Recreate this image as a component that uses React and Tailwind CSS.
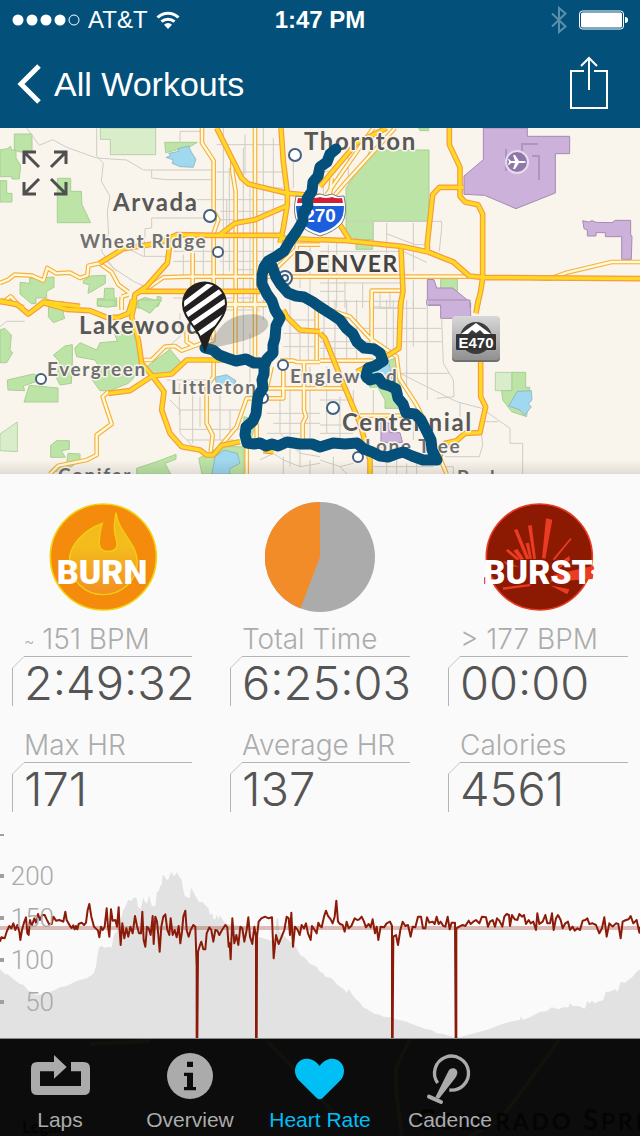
import React, { useState } from "react";
import clsx from "clsx";

// Map geometry, one entry per tile. Tile units are a third of a map unit.
const TILES = [
  {
    id: "nw",
    transform: "translate(0 128) scale(0.33333)",
    parks:
      "M43 18H96V72H60L43 66Z M0 66L22 62L32 55L34 66H48V90L62 112L58 153H36V146H0Z M0 158H20V196H36V222H0Z M172 151H212V190H244L246 230L272 284H172Z M494 43H592L572 55L520 68L497 74Z M60 463L90 466L88 452L162 447V478L140 490V510H108V527H94L60 498Z M250 458L272 444L316 442V466L296 478L280 488L264 496L268 470L250 466Z M314 481H342V510H350V535H292V512H312Z M410 520L434 508L470 518L472 505L485 508L475 535L440 540H400Z",
    paleParks: "M301 0H467V80H331V34H301Z",
    water:
      "M498 88L512 84L506 76L536 70L534 62L566 54L574 72L588 94L580 118L540 116L516 106L520 96Z",
    airfields: "",
    minor:
      "M80 0L118 52L158 35L200 58L290 90L380 96L430 126H640 M290 0V85L310 105L304 160L330 205L322 250L326 320L306 345V372L340 420L400 460L440 478 M455 126V150L500 155H640 M540 45V10H600 M670 0V540 M688 120V430 M730 60V540 M750 180V540 M790 0V540 M820 30V400 M735 20V140 M650 50H840 M650 132H850 M540 215H850 M455 270H640 M455 270V300L435 302V330 M660 250H820 M660 275H760 M680 215V300 M520 370H840 M660 400H790 M520 400H640 M700 425H800 M610 340V440 M550 380V440 M320 400L350 430 M660 510H760 M520 510H560 M880 60V180 M780 180H850 M360 350L430 385H500 M433 385V330 M930 350V500 M900 370V480",
    secondary:
      "M606 0V45L641 98V250L655 275L641 315 M765 0V540 M697 100V130L707 190V540 M641 320V540 M578 375V540 M430 490L490 448L560 446H960 M0 465L25 455L44 440L96 443L130 458L142 420L168 436L210 434L240 450L262 442L265 413L298 406L335 432L355 470L385 492 M365 506V540 M365 506L385 500 M0 520L15 518L32 505L50 525 M680 528H800 M830 420L890 362V350H960",
    motorway:
      "M650 0L725 150L745 168L858 195L960 205 M843 0L850 100L862 195V230L850 300L840 345 M660 320L705 286L765 275L865 232 M298 406L370 362L480 345L530 320L640 322H840 M530 322L508 360L502 405L440 475L405 500L398 540 M415 490H780 M0 518L50 530L70 540 M110 540L130 522L240 535 M840 330L960 336",
  },
  {
    id: "ne",
    transform: "translate(320 128) scale(0.33333)",
    parks:
      "M150 66H327V280H160V335H78V180L140 90Z M108 345H158V364H108Z M362 452H412V490H362Z M296 0H326V8H300Z",
    paleParks: "",
    water: "",
    airfields:
      "M490 0H622V25H749V77H706V195L588 242L494 202L432 199V144L490 95Z M788 278L806 282L816 278L828 283L876 284L886 277H932V322L936 324L934 394H905V326H856V314H828V324H802V306L792 302Z M322 454L342 455L350 480H398L452 524V540H362V532H322Z",
    minor:
      "M80 280H365V300L358 370 M160 280V340 M200 285V430 M280 285V430 M200 317L285 350 M245 368L320 403 M280 350H320 M50 345V540 M25 350V540 M75 460V540 M0 490H75 M128 465V540 M0 465H240 M0 370H240 M0 520H240 M180 490V540 M210 490V540 M280 455V540 M60 180L110 130 M10 100V200 M0 130H40 M85 60V180",
    secondary:
      "M0 446H445 M155 540V488H240 M488 448H620L690 452L740 434L875 402H960 M30 200L35 150 M20 200L160 0 M45 200L75 165L225 0",
    motorway:
      "M0 175L110 45L200 0 M0 335L80 338L245 355L325 372L400 402L448 444L486 448L960 452 M388 0V50L420 118V205L435 222L474 230L488 258V450L482 490L470 540 M430 178H358L338 200L322 345V375 M60 290L88 335 M243 362L249 490L240 540",
  },
  {
    id: "sw",
    transform: "translate(0 300) scale(0.33333)",
    parks:
      "M146 8L190 5V40L194 55L160 68L145 50Z M292 0H345V18L320 22L292 15Z M0 90L14 85L34 105L30 150L38 158L20 188H0Z M224 145L240 128L290 150L300 128L352 124L344 102L420 70L410 120L420 190L400 235L385 250L330 272H300L270 230L300 205L285 180L230 170Z M195 138L217 134V200L214 250L180 255L170 235L178 185L160 165Z M22 240L100 222L122 230V240L70 258L74 272L24 270Z M88 256L174 264V306H72Z M440 200L510 148L545 190L515 225H450Z M152 436L170 422H208V448L184 452L196 472H152Z M204 460L240 462V480L215 500L150 520L200 490Z M410 505L470 485L528 463V478L495 490L512 522H410Z M596 475L660 440H732V522H606Z M732 350L770 360L750 430L730 400Z M415 0H485L450 40L415 20Z",
    paleParks: "M0 402L52 366V455L0 452Z",
    water:
      "M644 232L680 224L708 242L700 258L650 252Z M645 470L672 450L712 460L720 490L690 505L688 522H636Z",
    airfields: "",
    minor:
      "M0 80L20 64H74 M480 160L540 110V40 M510 300L540 330H720 M540 330V400L580 440 M578 240V430 M538 250V345 M500 240H640 M660 280V420 M540 388H720 M560 420H700 M690 330V400 M750 100V290 M600 290V380 M730 0V170 M790 0V60 M800 340H960 M840 300V400L900 460L960 470 M870 0V180 M870 270V500 M930 200V420 M780 480L820 460L850 480L900 500 M850 100H950 M850 60H950 M850 140H950 M900 90V180 M925 0V180 M660 30H780 M820 370H960 M850 470V522 M900 440V500L960 490 M880 225H960 M800 400H900 M520 60L560 110 M930 480V522",
    secondary:
      "M150 522L175 497L260 480L290 465V405L335 372L308 290L325 275 M430 180H455L495 140L525 138L545 152L605 130L640 122V90 M560 90V125L580 138 M706 0V180 M765 0V170 M641 180V230L620 260V370L638 405L632 455 M850 190V295H740L710 380L660 440 M740 430V522 M680 15H800 M800 265H960 M840 182H880L890 186H960 M912 182V330L918 350L908 370V420 M950 0V180 M130 0L200 22L240 18 M770 370V420 M815 200L800 265 M365 0V30",
    motorway:
      "M0 5L50 12L85 42L130 8L200 28L270 32L320 52H355L385 40L398 0 M405 0L395 50L415 120L425 190L457 228L492 275L485 330L510 400L545 440L600 450L620 465H640L665 436L720 425 M325 280L390 272L457 228L515 222L560 180H780 M850 30L860 50L900 90L960 95 M790 452L820 455",
  },
  {
    id: "se",
    transform: "translate(320 300) scale(0.33333)",
    parks:
      "M576 217H617V262H630L625 290L620 350L575 335L548 300L545 272H576Z M195 185L225 175L232 210L240 260L205 260L150 262L145 230Z M175 265L215 268L250 325H195V300Z",
    paleParks: "M526 217H576V272H526Z",
    water:
      "M150 220L175 185L205 180L215 235L190 250Z M592 274L634 272L636 300L625 312L634 320L614 346L600 330L566 318Z",
    airfields:
      "M320 0H450V20L452 30V55H362V15H320Z M183 365L210 370V398H240L248 428H183Z",
    minor:
      "M45 0V180 M12 40V180 M80 0V180 M110 0V180 M200 0V150 M220 0V160 M260 0V220 M280 0V140 M322 0V300 M0 85H155 M0 125H150 M0 145H150 M160 25H320 M160 85H365 M240 125H365 M240 220H390 M160 20L240 25 M365 55L370 190L400 240L402 290L350 295 M200 200L320 260L410 305L485 325L570 385V430H608V522 M490 365H535 M485 405L488 435L478 470H375 M375 500H400V522 M20 200V400 M60 290V420 M0 300H90 M0 375H80 M0 400H100 M100 270V320 M160 270V340 M260 210V260 M280 350V420 M0 480L60 500L100 490 M40 470V522 M60 500L80 522 M180 440L250 470 M200 480V522 M230 480V522 M260 490V522 M160 500H340 M290 480V522 M420 310V350",
    secondary:
      "M155 0V130 M0 20L90 50L150 115L230 170L238 235L290 315L345 430L360 475L380 522 M0 182H160 M0 265H80 M120 347H290 M140 415V440",
    motorway:
      "M243 0L240 60L237 145L190 175L110 215 M0 100L15 115L65 240L120 370L150 480V522 M475 0L468 40 M482 150V290L497 320L488 360L480 398L435 400L410 422L375 430L355 480",
  },
];

const ROUTE =
  "336,149 330,154 327,162 320,167 318,176 313,182 312,191 307,199 308,206 303,213 303,221 297,231 290,241 284,251 277,256 268,261 264,267 262,275 262,284 267,294 272,301 275,310 280,318 276,326 275,338 273,345 273,353 267,359 264,366 264,374 262,380 263,388 258,396 257,404 256,414 253,421 246,427 245,435 247,443 254,444 260,443 266,446 272,444 278,446 287,442 300,444 312,444 320,447 333,443 345,444 357,443 364,449 372,452 380,456 388,457 396,454 403,452 412,456 423,460 437,460 432,450 431,440 427,432 421,420 415,414 406,413 403,404 398,398 396,389 390,386 383,384 378,378 370,380 366,376 368,368 375,366 383,361 380,353 374,349 364,348 357,342 353,334 346,328 340,320 331,314 320,307 313,302 304,297 296,296 288,293 281,285 276,277 272,266";
const ROUTE_START =
  "205,348 213,350 219,355 227,358 236,361 246,359 254,363 263,363";

const TOWNS = [
  { name: "Thornton", x: 304, y: 150, big: true, dot: [295, 155, 6] },
  { name: "Arvada", x: 113, y: 211, big: true, dot: [210, 216, 6] },
  { name: "Wheat Ridge", x: 80, y: 248, dot: [218, 252, 5] },
  { name: "Lakewood", x: 79, y: 334, big: true },
  { name: "Evergreen", x: 47, y: 376, dot: [41, 379, 5] },
  { name: "Littleton", x: 171, y: 394, dot: [263, 398, 5] },
  { name: "Englewood", x: 290, y: 383, dot: [283, 365, 5] },
  { name: "Centennial", x: 342, y: 431, big: true, dot: [333, 408, 6] },
  { name: "Lone Tree", x: 365, y: 453, dot: [358, 457, 5] },
  { name: "Conifer", x: 58, y: 482 },
  { name: "Parker", x: 457, y: 484 },
];

// Elevation and heart rate samples, in thirds of a chart unit.
const ELEVATION =
  "0,448 15,462 25,464 40,478 60,492 70,494 85,512 95,515 105,525 130,522 140,520 160,512 180,502 200,498 225,485 240,480 260,475 280,462 288,440 292,410 297,382 305,378 315,384 325,380 335,382 342,345 350,335 362,300 370,270 375,262 385,240 394,242 402,232 410,235 414,262 422,266 430,232 435,246 441,250 448,226 454,254 460,260 467,255 470,218 477,212 480,198 485,195 488,165 494,168 500,180 505,178 510,164 515,156 520,168 526,165 531,155 535,165 545,180 549,205 554,228 562,232 568,236 574,203 580,215 590,235 597,246 608,246 615,255 625,264 630,284 637,280 640,298 646,298 650,284 655,300 660,286 668,300 680,312 700,315 740,320 760,336 775,350 800,358 810,362 825,355 829,300 834,292 838,335 850,345 870,365 880,370 890,385 900,405 912,410 920,420 930,432 940,435 950,440 960,455 970,460 976,470 985,472 995,475 1000,480 1010,492 1020,500 1030,506 1040,518 1047,506 1054,520 1065,535 1078,546 1090,562 1105,570 1125,582 1140,584 1150,590 1175,592 1187,598 1220,605 1235,612 1280,628 1295,630 1310,640 1330,642 1360,652 1380,652 1400,646 1440,635 1460,630 1490,618 1520,608 1545,602 1560,600 1563,588 1568,600 1590,592 1620,575 1640,574 1655,562 1675,568 1690,562 1705,562 1710,550 1718,558 1735,558 1755,566 1762,542 1768,552 1775,542 1785,550 1795,545 1810,540 1817,515 1830,515 1845,508 1853,515 1862,486 1875,488 1900,468 1910,455 1920,448";

const HEART_RATE =
  "0,365 4,352 14,355 20,335 28,318 34,325 40,310 46,330 52,315 58,335 61,360 66,330 72,308 78,292 82,340 86,345 90,300 95,318 103,295 108,308 114,282 120,300 126,285 134,285 140,298 147,312 155,312 160,290 168,302 178,300 190,305 196,275 200,300 210,318 215,324 220,316 224,328 228,318 232,328 236,312 245,308 252,315 258,308 263,270 268,252 274,290 282,320 294,332 298,352 303,320 308,330 314,320 320,265 324,320 328,350 333,268 338,302 346,300 351,320 356,262 359,330 362,375 367,310 373,355 379,325 385,350 391,320 398,340 405,288 411,318 417,340 423,340 427,275 431,360 436,380 441,320 446,325 452,345 458,288 461,372 466,290 471,305 475,345 479,395 484,320 490,290 496,283 502,330 508,345 512,295 518,345 524,330 530,352 536,318 541,370 546,335 550,290 556,272 560,330 566,350 572,330 580,315 586,320 590,440 590,655 592,655 594,395 600,375 604,365 610,388 616,388 620,340 628,322 634,330 640,365 646,330 652,332 658,345 666,330 676,315 682,322 686,380 689,370 692,418 697,295 703,370 709,345 715,375 721,320 727,325 733,365 740,330 745,292 750,350 757,372 763,320 768,350 768,655 770,655 771,350 776,305 784,295 795,290 806,295 816,292 821,415 828,345 836,372 845,350 853,330 860,290 866,295 870,345 874,278 879,380 885,320 893,330 899,345 905,315 912,325 918,310 924,340 932,360 936,318 944,330 950,340 955,308 960,318 965,322 972,290 978,272 984,288 992,298 998,310 1004,290 1009,242 1014,305 1020,312 1028,315 1034,335 1040,305 1046,325 1054,318 1064,295 1072,300 1078,298 1085,290 1092,305 1098,322 1106,312 1112,322 1118,298 1125,340 1130,320 1135,360 1142,320 1152,322 1160,310 1170,305 1176,318 1176,655 1178,655 1180,350 1188,345 1194,375 1201,330 1208,305 1216,318 1224,315 1232,350 1238,320 1246,322 1254,290 1263,290 1269,325 1276,325 1281,292 1288,308 1298,305 1304,312 1310,290 1316,312 1322,305 1330,318 1336,320 1343,290 1349,328 1355,308 1365,308 1367,655 1369,655 1369,325 1378,320 1388,315 1396,318 1406,302 1412,312 1420,305 1428,300 1438,310 1446,290 1458,292 1464,320 1470,305 1478,300 1485,320 1491,295 1498,302 1507,320 1513,290 1520,282 1527,285 1530,318 1536,285 1544,298 1552,300 1558,282 1566,290 1572,285 1578,312 1586,300 1592,310 1600,305 1608,330 1612,280 1618,312 1628,305 1636,285 1642,310 1650,310 1656,280 1661,330 1668,295 1674,285 1682,300 1688,325 1696,310 1704,305 1710,330 1718,320 1724,332 1732,325 1740,330 1748,302 1756,300 1762,295 1768,312 1778,310 1788,315 1798,340 1806,325 1813,292 1820,350 1828,310 1838,320 1848,310 1855,312 1862,355 1868,305 1878,300 1886,298 1892,288 1900,310 1910,300 1918,338 1920,320";

const AXIS = [
  { value: 200, y: 876 },
  { value: 150, y: 918 },
  { value: 100, y: 960 },
  { value: 50, y: 1002 },
];

const StatusBar = () => (
  <div className="grid grid-cols-3 items-center h-10 px-3 text-2xl">
    <div className="flex items-center gap-2">
      <svg className="w-[68px] h-3" viewBox="0 0 68 12" fill="white">
        <circle cx="6" cy="6" r="5.5" />
        <circle cx="20" cy="6" r="5.5" />
        <circle cx="34" cy="6" r="5.5" />
        <circle cx="48" cy="6" r="5.5" />
        <circle cx="62" cy="6" r="5" fill="none" stroke="white" />
      </svg>
      <span>AT&amp;T</span>
      <svg className="w-6 h-5" viewBox="0 0 24 20" fill="none" stroke="white">
        <path d="M1.5 7.5A15 15 0 0 1 22.500 7.500" strokeWidth="3" />
        <path d="M5.500 11.700A9.500 9.500 0 0 1 18.500 11.700" strokeWidth="3" />
        <path d="M12 19L8 14.800A5.500 5.500 0 0 1 16 14.800Z" fill="white" stroke="none" />
      </svg>
    </div>
    <div className="text-center font-bold">1:47 PM</div>
    <div className="flex items-center justify-end gap-3">
      <svg className="w-4 h-7" viewBox="0 0 16 28" fill="none" stroke="#5b90ad" strokeWidth="2">
        <path d="M1 7.500L14.500 20.500L8 26V2L14.500 7.500L1 20.500" />
      </svg>
      <svg className="w-[49px] h-5" viewBox="0 0 49 20">
        <rect x="0.500" y="1" width="44" height="18" rx="3" fill="none" stroke="white" />
        <rect x="2" y="2.500" width="41" height="15" rx="1.500" fill="white" />
        <path d="M46 7Q49 7 49 10Q49 13 46 13Z" fill="white" />
      </svg>
    </div>
  </div>
);

const Header = () => (
  <header className="bg-[#03507a] text-white font-['Liberation_Sans',Arial,sans-serif]">
    <StatusBar />
    <div className="flex items-center justify-between h-[88px] pl-4 pr-8">
      <a href="#workouts" className="flex items-center gap-3 text-[34px] leading-10">
        <svg className="w-[26px] h-10" viewBox="0 0 26 40" fill="none" stroke="white" strokeWidth="5">
          <path d="M23 2L5 20L23 38" />
        </svg>
        All Workouts
      </a>
      <button type="button" aria-label="Share" className="pb-1">
        <svg className="w-[38px] h-[53px]" viewBox="0 0 38 53" fill="none" stroke="white" strokeWidth="2">
          <path d="M14 15H1V52H37V15H24M19 34V2M11 10L19 2L27 10" />
        </svg>
      </button>
    </div>
  </header>
);

const MapLayer = ({ layer, ...rest }) => (
  <g {...rest}>
    {TILES.map((tile) => (
      <path key={tile.id} transform={tile.transform} d={tile[layer]} />
    ))}
  </g>
);

const InterstateShield = () => (
  <g>
    <path
      d="M296 196Q302 198 308 194Q314 197 320 194Q326 197 332 194Q338 198 344 196Q348 214 342 223Q334 232 320 236Q306 232 298 223Q292 214 296 196Z"
      fill="#ffffff"
      stroke="#7d7d80"
    />
    <path d="M298 198Q304 199 308 197Q314 199 320 197Q326 199 332 197Q336 199 342 198L343 203H297Z" fill="#cf2038" />
    <path d="M296 206H344Q344 217 339 222Q332 230 320 233Q308 230 301 222Q296 217 296 206Z" fill="#1c5fdc" />
    <text x="320" y="222" textAnchor="middle" className="fill-white text-[19px] font-bold">
      270
    </text>
  </g>
);

const TollSign = () => (
  <g>
    <rect x="452" y="317" width="48" height="45" rx="4" fill="#6f6f6f" />
    <rect x="452" y="316" width="48" height="44" rx="4" fill="url(#sign)" />
    <circle cx="476" cy="338" r="16" fill="#3c3c3c" />
    <path d="M461 334L476 323L491 334L484 334L480 330L476 333L472 330L468 334Z" fill="white" />
    <rect x="456" y="334" width="40" height="16" rx="1" fill="#333333" />
    <text x="476" y="348" textAnchor="middle" className="fill-white text-[15px] font-bold">
      E470
    </text>
  </g>
);

const StartPin = () => (
  <g>
    <path d="M206 349C216 334 222 318 243 315C258 312 270 317 268 326C264 338 232 344 206 349Z" fill="#555555" opacity="0.3" />
    <clipPath id="pin">
      <path d="M205 350L199 335C193 324 183 316 183 304A21.500 21.500 0 0 1 226 304C226 316 216 324 210 335Z" />
    </clipPath>
    <g clipPath="url(#pin)">
      <path d="M180 280H230V352H180Z" fill="#231f20" />
      <path d="M180 307L212 283M181 319L228 286M188 327L230 298M196 336L230 312" stroke="white" strokeWidth="5" />
    </g>
    <path
      d="M205 350L199 335C193 324 183 316 183 304A21.500 21.500 0 0 1 226 304C226 316 216 324 210 335Z"
      fill="none"
      stroke="#231f20"
      strokeWidth="2"
    />
  </g>
);

const WorkoutMap = () => (
  <section className="relative" aria-label="Route">
    <svg className="block w-full" viewBox="0 128 640 346">
      <defs>
        <linearGradient id="sign" x2="0" y2="1">
          <stop stopColor="#d8d8d8" />
          <stop offset="1" stopColor="#909090" />
        </linearGradient>
        <linearGradient id="fade" x2="0" y2="1">
          <stop stopColor="#000000" stopOpacity="0" />
          <stop offset="1" stopColor="#000000" stopOpacity="0.1" />
        </linearGradient>
      </defs>
      <path d="M0 128H640V474H0Z" fill="#f9f5ed" />
      <MapLayer layer="paleParks" fill="#d9edcb" stroke="#b5d3a2" strokeWidth="3" />
      <MapLayer layer="parks" fill="#bce4a7" stroke="#a9cf92" strokeWidth="3" />
      <MapLayer layer="water" fill="#a0d8f0" stroke="#7fa8b5" strokeWidth="2" />
      <MapLayer layer="airfields" fill="#ccb1da" stroke="#a48cb2" strokeWidth="3" />
      <path d="M522 151V144H538M532 156H539V180M506 149V171" fill="none" stroke="#b094c0" strokeWidth="2" />
      <MapLayer layer="minor" fill="none" stroke="#cfccc5" strokeWidth="3" />
      <MapLayer layer="secondary" fill="none" stroke="#f6b13e" strokeWidth="14" strokeLinejoin="round" />
      <MapLayer layer="secondary" fill="none" stroke="#fffadb" strokeWidth="7" strokeLinejoin="round" />
      <MapLayer layer="motorway" fill="none" stroke="#f79a45" strokeWidth="17" strokeLinejoin="round" />
      <MapLayer layer="motorway" fill="none" stroke="#ffd91f" strokeWidth="10" strokeLinejoin="round" />

      {/*Town names*/}
      <g fill="#ffffff" stroke="#43607f" strokeWidth="2">
        {TOWNS.filter((town) => town.dot).map(({ name, dot: [cx, cy, r] }) => (
          <circle key={name} cx={cx} cy={cy} r={r} />
        ))}
        <circle cx="285" cy="278" r="7" />
        <circle cx="285" cy="278" r="3" />
      </g>
      <g
        className="font-['Lato',sans-serif] font-bold tracking-widest"
        stroke="#f9f5ed"
        strokeWidth="3"
        strokeLinejoin="round"
        paintOrder="stroke"
      >
        {TOWNS.map(({ name, x, y, big }) => (
          <text
            key={name}
            x={x}
            y={y}
            className={big ? "fill-[#585858] text-[24px]" : "fill-[#707070] text-[19px]"}
          >
            {name}
          </text>
        ))}
        <text x="293" y="272" className="fill-[#444444] text-[28px]">
          D<tspan className="text-[23px]">ENVER</tspan>
        </text>
      </g>

      <g className="font-['Liberation_Sans',Arial,sans-serif]">
        <InterstateShield />
        <TollSign />
      </g>
      <circle cx="517" cy="162" r="11" fill="#8f77a9" stroke="#e6dcec" strokeWidth="2" />
      <path
        d="M526 162Q526 161 523 161H519L515 155H513L515 161H511L509 159H508L509 162L508 165H509L511 163H515L513 169H515L519 163H523Q526 163 526 162Z"
        fill="white"
      />

      {/*The recorded route*/}
      <g fill="none" stroke="#04507a" strokeWidth="11" strokeLinecap="round" strokeLinejoin="round">
        <polyline points={ROUTE} />
        <polyline points={ROUTE_START} />
      </g>
      <StartPin />
      <path d="M0 460H640V474H0Z" fill="url(#fade)" />
    </svg>
    <button type="button" aria-label="Expand map" className="absolute left-[22px] top-[22px]">
      <svg className="size-[46px]" viewBox="0 0 46 46" fill="none" stroke="#4f4f4f" strokeWidth="3">
        <path d="M2 14V2H14M2 2L17 17M32 2H44V14M44 2L29 17M2 32V44H14M2 44L17 29M32 44H44V32M44 44L29 29" />
      </svg>
    </button>
  </section>
);

const BurnIcon = () => (
  <svg className="size-[110px] overflow-visible" viewBox="141 66 330 330">
    <defs>
      <linearGradient id="flame" x2="0" y2="1">
        <stop stopColor="#f5b81c" />
        <stop offset="0.400" stopColor="#f4bd1c" />
        <stop offset="1" stopColor="#f28f22" />
      </linearGradient>
    </defs>
    <circle cx="310" cy="231" r="159" fill="#f48b0c" stroke="#f2d211" strokeWidth="5" />
    <path
      d="M348 98C343 130 340 152 347 172C356 200 350 214 325 214C300 214 297 200 298 180C299 158 302 145 307 130C255 148 206 195 208 245C210 300 255 344 308 344C362 344 412 305 412 245C412 190 355 158 348 98Z"
      fill="url(#flame)"
      stroke="#f2cf13"
      strokeWidth="4"
    />
    <text
      x="306"
      y="312"
      textAnchor="middle"
      className="font-['Roboto',sans-serif] font-black text-[102px] fill-white"
    >
      BURN
    </text>
  </svg>
);

const BurstIcon = () => (
  <svg className="size-[110px] overflow-visible" viewBox="489 66 330 330">
    <circle cx="658" cy="231" r="159" fill="#8c1902" stroke="#ea3b23" strokeWidth="5" />
    <path
      d="M678 115L697 119L676 236L666 234Z M624 137L635 135L648 236L640 238Z M582 150L592 147L628 236L618 238Z M617 190L627 188L636 236L628 236Z M580 212L592 206L612 236L602 240Z M557 212L564 207L600 238L590 240Z M751 174L755 177L704 240L698 238Z M735 236L748 228L750 240L700 280Z M700 285L820 257L823 268L808 274L820 284L818 297L690 305Z M690 316L748 328L742 343Z M548 322L630 312L632 318L550 330Z M492 292L520 290V308L492 312Z M550 242L600 262L560 256Z"
      fill="#ea3b23"
    />
    <text
      x="655"
      y="312"
      textAnchor="middle"
      className="font-['Roboto',sans-serif] font-black text-[102px] fill-white"
    >
      BURST
    </text>
  </svg>
);

const ZonePie = () => (
  <svg className="size-[110px]" viewBox="0 0 110 110">
    <circle cx="55" cy="55" r="55" fill="#ababab" />
    <path d="M55 55V0A55 55 0 0 0 35.500 106.500Z" fill="#f28c28" />
  </svg>
);

const Stat = ({ label, value }) => (
  <div className="min-w-0">
    <dt className="pl-3 text-[28px] leading-[34px] text-[#acacac] whitespace-nowrap">{label}</dt>
    <dd className="flex h-[50px]">
      <div className="flex flex-col w-3 shrink-0">
        <svg className="size-3 shrink-0" viewBox="0 0 12 12" stroke="#c4c4c4">
          <path d="M0.500 12L12 0.500" />
        </svg>
        <div className="grow border-l border-[#b4b4b4]" />
      </div>
      <div className="grow min-w-0 border-t border-[#b4b4b4] text-[47px] leading-[52px] text-[#555555] whitespace-nowrap">
        {value}
      </div>
    </dd>
  </div>
);

const Stats = () => (
  <section className="px-3 pt-7 font-['Inter',sans-serif] font-light">
    <div className="grid grid-cols-3 gap-x-[38px] justify-items-center">
      <BurnIcon />
      <ZonePie />
      <BurstIcon />
    </div>
    <dl className="grid grid-cols-3 gap-x-[38px] gap-y-[22px] mt-[10px]">
      <Stat label={<><span className="text-base align-middle">~</span> 151 BPM</>} value="2:49:32" />
      <Stat label="Total Time" value="6:25:03" />
      <Stat label="> 177 BPM" value="00:00" />
      <Stat label="Max HR" value="171" />
      <Stat label="Average HR" value="137" />
      <Stat label="Calories" value="4561" />
    </dl>
  </section>
);

const HeartRateChart = () => (
  <svg className="block w-full" viewBox="0 812 640 226" role="img" aria-label="Heart rate over elevation">
    <g transform="translate(0 820) scale(0.33333)">
      <polygon points={`${ELEVATION} 1920,655 0,655`} fill="#e2e2e2" />
      <path d="M0 318H1920V330H0Z" fill="#8c1902" opacity="0.280" />
      <polyline points={HEART_RATE} fill="none" stroke="#8c1a08" strokeWidth="6" strokeLinejoin="round" />
    </g>
    <path d="M0 834H4V836H0Z" fill="#9f9f9f" />
    {AXIS.map(({ value, y }) => (
      <g key={value}>
        <path d={`M0 ${y - 2}H4V${y + 2}H0Z`} fill="#9f9f9f" />
        <text
          x="54"
          y={y + 9}
          textAnchor="end"
          className="font-['Roboto',sans-serif] font-light text-[26px] fill-[#a9a9a9]"
        >
          {value}
        </text>
      </g>
    ))}
  </svg>
);

const TABS = [
  {
    name: "Laps",
    viewBox: "90 42 180 168",
    icon: (
      <path d="M162 78H112Q93 78 93 97V158Q93 177 112 177H251Q270 177 270 158V97Q270 78 251 78H213V106H243V150H120V106H162V128L200 93L162 57Z" />
    ),
  },
  {
    name: "Overview",
    viewBox: "480 42 180 168",
    icon: (
      <>
        <circle cx="570" cy="120" r="69" />
        <path d="M561 77H579V93H561Z M552 110H579V153H588V163H552V153H561V120H552Z" fill="#0c0c0c" />
      </>
    ),
  },
  {
    name: "Heart Rate",
    viewBox: "870 42 180 168",
    icon: (
      <path d="M959 90C948 74 934 68 920 68C898 68 885 86 885 104C885 116 890 126 898 134L950 186Q959 194 968 186L1020 134C1028 126 1032 116 1032 104C1032 86 1018 68 996 68C984 68 969 74 959 90Z" />
    ),
  },
  {
    name: "Cadence",
    viewBox: "300 42 180 168",
    icon: (
      <>
        <path d="M353 141A51 51 0 1 1 388 162" fill="none" stroke="currentColor" strokeWidth="10" />
        <path d="M385 106C390 92 414 94 412 112Q411 120 404 128L357 188L346 184Z" />
        <path d="M327 182L363 198" stroke="currentColor" strokeWidth="12" strokeLinecap="round" />
      </>
    ),
  },
];

const TabBar = () => {
  const [active, setActive] = useState("Heart Rate");

  return (
    <nav className="relative flex justify-center pr-[130px] pt-[11px] pb-1 overflow-hidden bg-[#0c0c0c] border-t border-[#8a8a8a] font-['Liberation_Sans',Arial,sans-serif]">
      {/*The map that shows through the bar*/}
      <svg className="absolute inset-0 size-full" viewBox="0 1039 640 97" preserveAspectRatio="xMinYMin slice" aria-hidden="true">
        <path
          d="M410 1039L396 1068V1090L402 1136M560 1039L530 1080L500 1120L470 1136M268 1042L300 1075L340 1120M90 1044L150 1041"
          fill="none"
          stroke="#13110b"
          strokeWidth="4"
        />
        <g className="font-['Lato',sans-serif] font-bold fill-[#040404]">
          <text x="22" y="1133" className="text-[17px]">Legal</text>
          <text x="417" y="1130" className="text-[28px] tracking-widest">
            C<tspan className="text-[23px]">OLORADO</tspan> S<tspan className="text-[23px]">PRINGS</tspan>
          </text>
        </g>
      </svg>
      {TABS.map(({ name, viewBox, icon }) => (
        <button
          key={name}
          type="button"
          onClick={() => setActive(name)}
          className={clsx(
            "relative flex flex-col items-center gap-0.5 w-[130px] shrink-0 text-[21px] leading-6",
            active === name ? "text-[#00bff5]" : "text-[#ababab]"
          )}
        >
          <svg className="w-[60px] h-14" viewBox={viewBox} fill="currentColor">
            {icon}
          </svg>
          {name}
        </button>
      ))}
    </nav>
  );
};

const App = () => (
  <div className="flex flex-col min-h-screen bg-[#fafafa]">
    <Header />
    <main className="grow">
      <WorkoutMap />
      <Stats />
      <HeartRateChart />
    </main>
    <TabBar />
  </div>
);

export default App;
